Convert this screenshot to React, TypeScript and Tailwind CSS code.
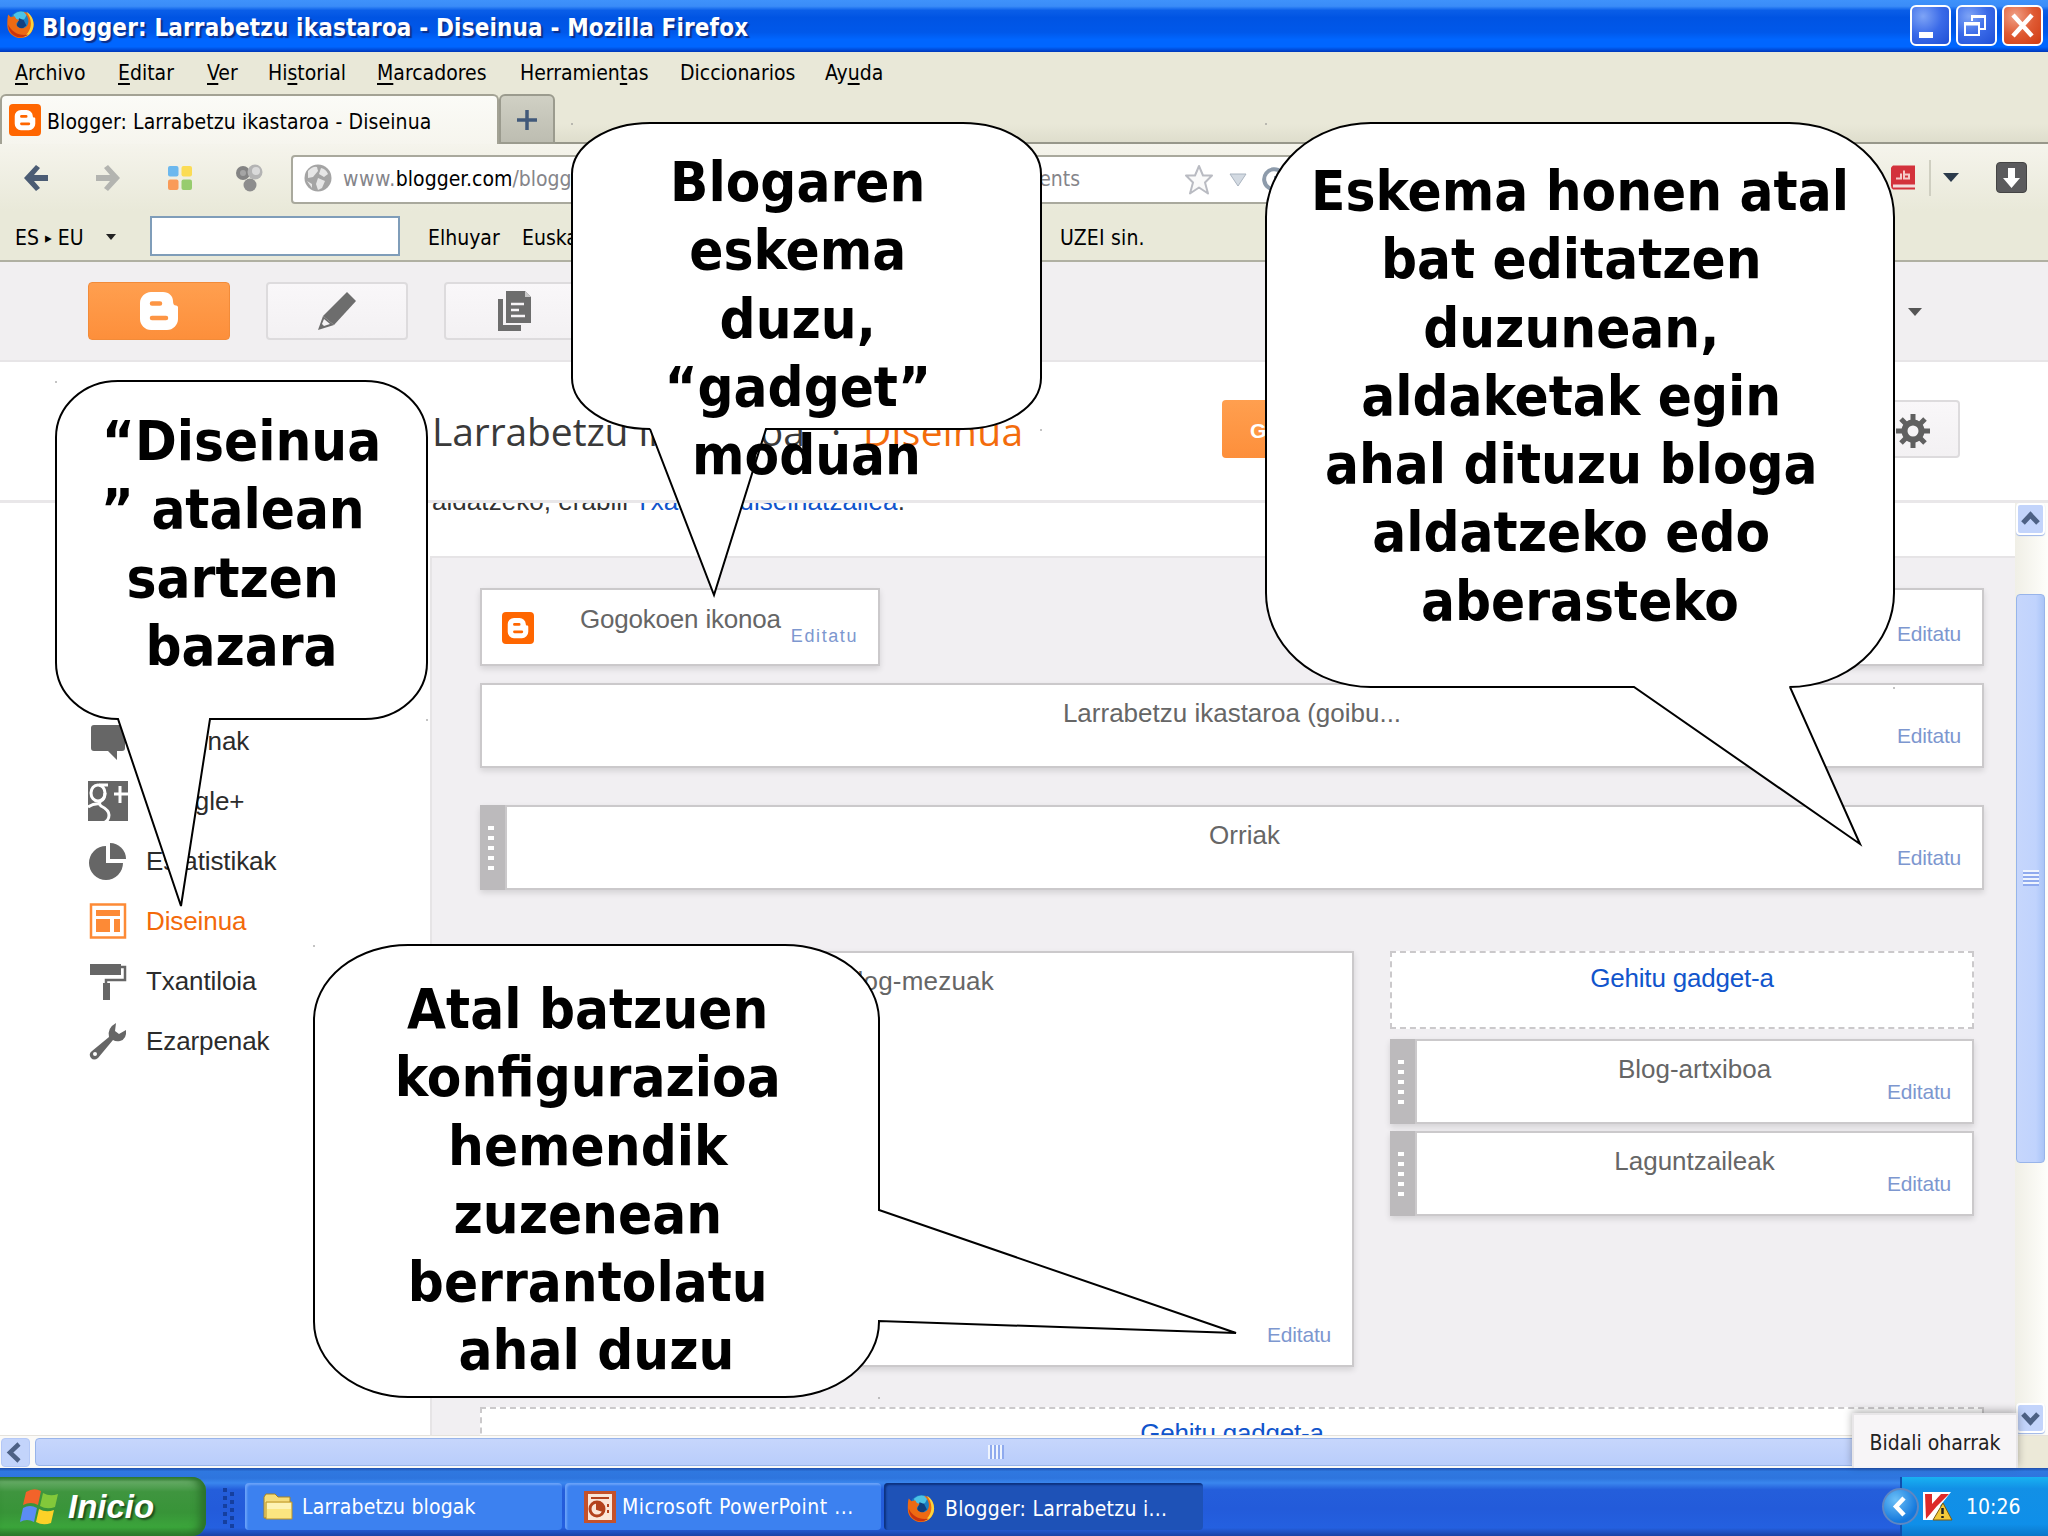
import type { ReactNode } from "react";

const menuItems = [
  { before: "", key: "A", after: "rchivo", width: "w-[103px]" },
  { before: "", key: "E", after: "ditar", width: "w-[89px]" },
  { before: "", key: "V", after: "er", width: "w-[61px]" },
  { before: "Hi", key: "s", after: "torial", width: "w-[109px]" },
  { before: "", key: "M", after: "arcadores", width: "w-[143px]" },
  { before: "Herramien", key: "t", after: "as", width: "w-[160px]" },
  { before: "Diccionarios", key: "", after: "", width: "w-[145px]" },
  { before: "Ay", key: "u", after: "da", width: "w-[80px]" },
];

const callouts = [
  {
    x: 572, y: 123, w: 469, h: 306,
    tail: [[766, 429], [714, 595], [650, 429]],
    side: "bottom",
    textTop: "pt-[25px]",
    lines: ["Blogaren ", "eskema ", "duzu, ", "“gadget” ", "moduan"],
  },
  {
    x: 1266, y: 123, w: 628, h: 564,
    tail: [[1790, 687], [1860, 844], [1634, 687]],
    side: "bottom",
    textTop: "pt-[34px]",
    lines: ["Eskema honen atal", "bat editatzen ", "duzunean, ", "aldaketak egin ", "ahal dituzu bloga ", "aldatzeko edo ", "aberasteko"],
  },
  {
    x: 56, y: 381, w: 371, h: 338,
    tail: [[210, 719], [181, 906], [118, 719]],
    side: "bottom",
    textTop: "pt-[26px]",
    lines: ["“Diseinua", "” atalean ", "sartzen ", "bazara"],
  },
  {
    x: 314, y: 945, w: 565, h: 452,
    tail: [[879, 1210], [1236, 1333], [879, 1321]],
    side: "right",
    textTop: "pt-[30px]",
    lines: ["Atal batzuen ", "konfigurazioa ", "hemendik ", "zuzenean ", "berrantolatu ", "ahal duzu"],
  },
];

const BloggerMark = ({ className, bg }: { className: string; bg: string }) => (
  <svg viewBox="0 0 24 24" className={className}>
    <rect width="24" height="24" rx="3" fill={bg} />
    <path d="M9 4.5h4.2a4.6 4.6 0 0 1 4.6 4.3c0 1 .3 1.3 1 1.3.6 0 .9.4.9 1v3.7a4.8 4.8 0 0 1-4.8 4.8H9a4.7 4.7 0 0 1-4.7-4.8V9.2A4.7 4.7 0 0 1 9 4.5z" fill="#fff" />
    <path d="M9.3 9.3h3.6M9.3 14.9h5.6" stroke={bg} strokeWidth="2" strokeLinecap="round" />
  </svg>
);

const FirefoxIcon = ({ className }: { className: string }) => (
  <svg viewBox="0 0 30 32" className={className}>
    <ellipse cx="16" cy="14" rx="12.5" ry="13" fill="#1c7fc4" />
    <path d="M8 5q7-6 15-1l-3 6-6 2-6-2z" fill="#4cc3e6" />
    <path d="M14 9l5 2 3 6-5 4-6-3z" fill="#0f3f80" />
    <path d="M2 5l3 3 4-1 2 3 3 1-3 4c0 4 4 6 8 5 4-1 6-5 5-10-1-4-3-6-5-8 6 1 11 7 11 14 0 8-6 15-14 15S1 25 1 17C1 13 1 8 2 5z" fill="#ee6a12" />
    <path d="M22 2c5 3 8 8 8 14 0 7-5 13-11 14 5-4 8-9 8-15 0-5-2-9-5-13z" fill="#fcd43c" />
    <path d="M2 16c0 7 5 14 13 14 4 0 7-1 9-3-9 2-18-2-22-11z" fill="#c9330f" />
  </svg>
);

const TitleBar = () => (
  <div className="h-[52px] shrink-0 flex items-center pl-1.5 pr-[5px] bg-[linear-gradient(#3f92fb_0%,#3a8cf8_12%,#0a5ee8_20%,#0054e3_34%,#0058ea_62%,#0066ff_76%,#0066ff_90%,#0045d0_97%,#0038b8_100%)]">
    <FirefoxIcon className="w-[28px] h-[29px] -mt-1" />
    <h1 className="ml-2 mt-1 text-[24px] tracking-[0.15px] font-bold text-white [text-shadow:2px_2px_1px_#0b2f8a]">
      Blogger: Larrabetzu ikastaroa - Diseinua - Mozilla Firefox
    </h1>
    <div className="ml-auto flex gap-[5px] -mt-0.5">
      <button className="w-[41px] h-[41px] rounded-md border-2 border-white bg-[radial-gradient(circle_at_30%_25%,#7ea4f6,#3a6ae8_50%,#1f4fd6)]">
        <svg viewBox="0 0 37 37"><rect x="7" y="25" width="14" height="6" fill="#fff" /></svg>
      </button>
      <button className="w-[41px] h-[41px] rounded-md border-2 border-white bg-[radial-gradient(circle_at_30%_25%,#7ea4f6,#3a6ae8_50%,#1f4fd6)]">
        <svg viewBox="0 0 37 37" fill="none" stroke="#fff" strokeWidth="2">
          <path d="M14 14V9h13v13h-5M14 10h13M7 16h14v12H7zM7 17.500h14" />
        </svg>
      </button>
      <button className="w-[41px] h-[41px] rounded-md border-2 border-white bg-[radial-gradient(circle_at_30%_25%,#f0a086,#df5a33_50%,#cf3a12)]">
        <svg viewBox="0 0 37 37"><path d="M9 8l19 21M28 8L9 29" stroke="#fff" strokeWidth="4.500" /></svg>
      </button>
    </div>
  </div>
);

const MenuBar = () => (
  <div className="h-[42px] shrink-0 flex items-center pl-[15px] pt-px bg-[#e9e8d8]">
    {menuItems.map((item) => (
      <div key={item.before + item.key} className={item.width}>
        {item.before}
        <span className="underline underline-offset-[3px] decoration-2">{item.key}</span>
        {item.after}
      </div>
    ))}
  </div>
);

const TabStrip = () => (
  <div className="h-[50px] shrink-0 flex items-end bg-[linear-gradient(#e9e8d8_60%,#dddccb)] shadow-[inset_0_-2px_#97978a]">
    <div className="w-[499px] h-[50px] flex items-center pl-[7px] rounded-t-md border-2 border-b-0 border-[#a3a294] bg-[linear-gradient(#fbfbf7,#f6f5ee)]">
      <BloggerMark className="size-[32px]" bg="#ff6600" />
      <span className="ml-1.5 mt-1.5 tracking-[0.1px]">Blogger: Larrabetzu ikastaroa - Diseinua</span>
    </div>
    <div className="w-[56px] h-[50px] flex items-center justify-center pt-0.5 rounded-t-md border-2 border-[#9b9b8e] bg-[linear-gradient(#d0d0c4,#bdbdb1)]">
      <svg viewBox="0 0 20 20" className="size-5"><path d="M10 0v20M0 10h20" stroke="#41597a" strokeWidth="3.500" /></svg>
    </div>
  </div>
);

const NavBar = () => (
  <div className="h-[67px] shrink-0 flex items-center pl-6 pr-[21px] bg-[linear-gradient(#f5f4ec,#e9e9d9)]">
    <svg viewBox="0 0 24 28" className="w-6 h-7"><path d="M0 14L12 1l4 3-6 7h14v6H10l6 7-4 3z" fill="#4b5c74" /></svg>
    <svg viewBox="0 0 24 28" className="ml-12 w-6 h-7"><path d="M24 14L12 1 8 4l6 7H0v6h14l-6 7 4 3z" fill="#b3b4b0" /></svg>
    <svg viewBox="0 0 24 24" className="ml-12 size-6">
      <rect width="10.500" height="10.500" rx="2" fill="#6cb8ee" />
      <rect x="13.500" width="10.500" height="10.500" rx="2" fill="#fbdc55" />
      <rect y="13.500" width="10.500" height="10.500" rx="2" fill="#f99b58" />
      <rect x="13.500" y="13.500" width="10.500" height="10.500" rx="2" fill="#97cc6e" />
    </svg>
    <svg viewBox="0 0 28 28" className="ml-[43px] size-7">
      <circle cx="8" cy="9" r="7" fill="#848484" />
      <circle cx="20" cy="8" r="7.500" fill="#b4b4b4" />
      <circle cx="21" cy="7" r="4" fill="#dadada" />
      <circle cx="15" cy="21" r="6.500" fill="#8d8d8d" />
      <circle cx="8" cy="9" r="3" fill="#a5a5a5" />
    </svg>
    <div className="ml-[28px] mt-1 w-[1020px] h-[49px] flex items-center pl-[11px] rounded-sm border-2 border-[#a9a99d] bg-white text-[#85858a]">
      <svg viewBox="0 0 28 28" className="-mt-1 size-7">
        <circle cx="14" cy="14" r="13.500" fill="#a4a4a4" />
        <path d="M4 7q5-5 9-4l1 4-5 6-5 1zM17 4q5 1 7 6l-4 3-5-3zM14 14l7 3-3 7-4 2-2-6zM3 17l5 3v4z" fill="#e6e6e6" />
      </svg>
      <span className="ml-[11px] tracking-[0.6px]">www.</span>
      <span className="text-black">blogger.com</span>
      <span>/blogger</span>
      <span className="ml-auto">ments</span>
      <svg viewBox="0 0 32 32" className="ml-[103px] mr-[14px] size-8">
        <path d="M16 2l4 9.500h9l-7 7 3 11-9-6-9 6 3-11-7-7h9z" fill="#fafafa" stroke="#b9bbc2" strokeWidth="2" strokeLinejoin="round" />
      </svg>
      <svg viewBox="0 0 18 14" className="mr-[12px] w-[18px] h-[14px]"><path d="M1 1h16L9 13z" fill="#d3dae2" stroke="#aab4c0" /></svg>
      <svg viewBox="0 0 28 28" className="mr-[22px] size-7"><path d="M22 6a10 10 0 1 0 2 12M24 3v9h-9" fill="none" stroke="#8d9bab" strokeWidth="4" /></svg>
    </div>
    <div className="ml-auto flex items-center">
      <svg viewBox="0 0 24 24" className="w-6 h-[25px]">
        <path d="M2 0h22v24H2q-2-1-2-4V2z" fill="#d3323c" />
        <path d="M2 19h22v3H2z" fill="#f3dcdc" />
        <path d="M5 13h5V8M13 5v8h5V9h-5" fill="none" stroke="#f5c9c9" strokeWidth="2" />
      </svg>
      <div className="ml-3.5 w-0.5 h-9 bg-[#cfcfc1]" />
      <svg viewBox="0 0 16 9" className="ml-3 w-4 h-[9px]"><path d="M0 0h16L8 9z" fill="#2b3a4a" /></svg>
      <div className="ml-[37px] size-[31px] rounded-sm border border-[#444] bg-[#5b5b5d]">
        <svg viewBox="0 0 29 29"><path d="M11 5h7v10h5l-8.500 10L6 15h5z" fill="#fff" /></svg>
      </div>
    </div>
  </div>
);

const DictionaryBar = () => (
  <div className="h-[51px] shrink-0 flex items-center pl-[15px] pt-1.5 bg-[#e9e9d9] border-b-2 border-[#b0b0a2]">
    <span className="w-[91px]">ES <small className="text-[15px] align-[2px]">▸</small> EU</span>
    <svg viewBox="0 0 10 6" className="w-[10px] h-[6px] -mt-1"><path d="M0 0h10L5 6z" fill="#222" /></svg>
    <div className="ml-[34px] -mt-1.5 w-[250px] h-10 border-2 border-[#7f9db9] bg-white" />
    <span className="ml-7 w-[94px]">Elhuyar</span>
    <span className="w-[538px]">Euskal</span>
    <span className="tracking-[0.2px]">UZEI sin.</span>
  </div>
);

const BloggerBar = () => (
  <div className="h-[100px] shrink-0 flex items-start pt-5 pl-[88px] bg-[#f1eff1] border-b-2 border-[#e7e5e7]">
    <button className="w-[142px] h-[58px] flex items-center justify-center rounded-sm border border-[#f28b39] bg-[linear-gradient(#ff9f4f,#fd8f3b)]">
      <svg viewBox="0 0 38 38" className="size-[38px]">
        <path d="M11 0h12c6 0 10 4 10 9 0 3 1 4.500 3 4.500 1.500 0 2 1 2 2V27c0 6-5 11-11 11H11C5 38 0 33 0 27V11C0 5 5 0 11 0z" fill="#fff" />
        <path d="M12 11.500h8M12 26h14" stroke="#fd9544" strokeWidth="4.500" strokeLinecap="round" />
      </svg>
    </button>
    <button className="ml-[36px] w-[142px] h-[58px] flex items-center justify-center rounded-sm border-2 border-[#dddbdd] bg-[linear-gradient(#f9f7f9,#f3f1f3)]">
      <svg viewBox="0 0 38 38" className="size-[38px]">
        <path d="M29 0l9 9-22 24-11-9z" fill="#6d6d6d" />
        <path d="M5 24l11 9L0 38z" fill="#6d6d6d" />
        <path d="M6 27l6 5-6 2-2-2z" fill="#f6f4f6" />
      </svg>
    </button>
    <button className="ml-[36px] w-[142px] h-[58px] flex items-center justify-center rounded-sm border-2 border-[#dddbdd] bg-[linear-gradient(#f9f7f9,#f3f1f3)]">
      <svg viewBox="0 0 34 40" className="w-[34px] h-10">
        <path d="M0 8h5v26h18v6H0z" fill="#6d6d6d" />
        <path d="M8 0h19l6 6v26H8z" fill="#6d6d6d" />
        <path d="M27 0v6h6" fill="#c9c9c9" />
        <path d="M13 13h13M13 19h8M13 25h14" stroke="#f6f4f6" strokeWidth="2.500" />
      </svg>
    </button>
    <svg viewBox="0 0 14 8" className="ml-auto mr-[126px] mt-[26px] w-[14px] h-2"><path d="M0 0h14L7 8z" fill="#555" /></svg>
  </div>
);

const PageHeading = () => (
  <div className="h-[141px] shrink-0 flex items-start pl-[432px] pr-[88px] pt-[38px] bg-white border-b-[3px] border-[#e9e7e9]">
    <h2 className="h-[58px] flex items-center pt-1 text-[39px] tracking-[-0.1px] font-['Open_Sans',sans-serif] text-[#3a3a3a]">
      <span className="w-[399px]">Larrabetzu ikastaroa</span>
      <span className="w-[32px]">·</span>
      <span className="text-[#f36c0c] tracking-[0.3px]">Diseinua</span>
    </h2>
    <button className="ml-auto w-[290px] h-[58px] pl-7 pt-1 text-left rounded-sm bg-[linear-gradient(#ff9f4f,#fd8f3b)] text-white font-bold text-[21px] font-['Liberation_Sans',sans-serif]">
      Gorde
    </button>
    <button className="ml-[340px] w-[108px] h-[58px] flex items-center justify-end pr-[28px] pt-1 rounded-sm border-2 border-[#dddbdd] bg-[linear-gradient(#f9f7f9,#f3f1f3)]">
      <svg viewBox="0 0 34 34" className="size-[34px]">
        <path d="M17 0v34M0 17h34M5 5l24 24M29 5L5 29" stroke="#606060" strokeWidth="5" />
        <circle cx="17" cy="17" r="8.500" fill="#f6f4f6" stroke="#606060" strokeWidth="6" />
      </svg>
    </button>
  </div>
);

const NavItem = ({ label, active, children }: { label: string; active?: boolean; children: ReactNode }) => (
  <li className="h-[60px] flex items-center">
    <svg viewBox="0 0 40 40" className="size-10" fill="#666">{children}</svg>
    <span className={active ? "ml-[18px] text-[#f3690a]" : "ml-[18px] text-[#2b2b2b]"}>{label}</span>
  </li>
);

const Sidebar = () => (
  <ul className="w-[430px] shrink-0 bg-white pt-[208px] pl-[88px] tracking-[-0.1px]">
    <NavItem label="Iruzkinak">
      <path d="M6 4h28q3 0 3 3v20q0 3-3 3h-5v9l-9-9H6q-3 0-3-3V7q0-3 3-3z" />
    </NavItem>
    <NavItem label="Google+">
      <path d="M0 0h40v40H0z" />
      <ellipse cx="10" cy="12" rx="7" ry="8" fill="none" stroke="#fff" strokeWidth="3" />
      <path d="M11 4h9M17 12q0 6-4 8-3 2 0 5 8 4 8 9 0 5-4 7M0 26q6-4 12-3M26 13h14M32 5v17" fill="none" stroke="#fff" strokeWidth="3" />
    </NavItem>
    <NavItem label="Estatistikak">
      <path d="M18 5v17h17a17 17 0 1 1-17-17z" />
      <path d="M22 2a16 16 0 0 1 16 16H22z" />
    </NavItem>
    <NavItem label="Diseinua" active>
      <path d="M3 3.500h34v33H3z" fill="none" stroke="#fd8a36" strokeWidth="2.500" />
      <path d="M8 9h24v6H8zM8 18h14v13H8zM26 18h6v13h-6z" fill="#fd8a36" />
    </NavItem>
    <NavItem label="Txantiloia">
      <path d="M2 3h31v11H2z" />
      <path d="M33 6h4v13H18v5" fill="none" stroke="#666" strokeWidth="2.500" />
      <path d="M15 22h7v17h-7z" />
    </NavItem>
    <NavItem label="Ezarpenak">
      <path d="M28 2l-1 8 4 3 7-4q1 9-6 11-4 1-7-1L10 37q-4 3-7 0-3-4 1-7l17-14q-2-9 7-14z" />
      <circle cx="7" cy="33" r="2" fill="#fff" />
    </NavItem>
  </ul>
);

const DragHandle = () => (
  <div className="w-[25px] shrink-0 flex flex-col items-center justify-center gap-1.5 pr-1 bg-[#bcbabc]">
    <i className="w-1.5 h-1 bg-white" />
    <i className="w-1.5 h-1 bg-white" />
    <i className="w-1.5 h-1 bg-white" />
    <i className="w-1.5 h-1 bg-white" />
    <i className="w-1.5 h-1 bg-white" />
  </div>
);

const Gadget = ({ title, className, handle }: { title: string; className: string; handle?: boolean }) => (
  <div className={"flex bg-white shadow-[0_3px_6px_rgba(0,0,0,0.12)] " + className}>
    {handle && <DragHandle />}
    <div className="flex-1 grid grid-cols-[1fr_auto_1fr] border-2 border-[#cbc9cb] pt-3.5 pb-[18px] px-[21px]">
      <span className="col-start-2 h-7 leading-7 text-[#666]">{title}</span>
      <a className="self-end justify-self-end h-6 leading-6 text-[21px] tracking-[-0.2px] text-[#7d97cf]">Editatu</a>
    </div>
  </div>
);

const LayoutEditor = () => (
  <div className="flex-1 flex flex-col overflow-hidden bg-white">
    <p className="h-[53px] shrink-0 whitespace-nowrap text-[#333]">
      <span className="block -mt-[17px] pl-0.5 leading-[30px] tracking-[0.05px]">
        aldatzeko, erabili <a className="text-[#1155cc]">Txantiloi diseinatzailea</a>.
      </span>
    </p>
    <div className="flex-1 bg-[#f1eff2] border-t-2 border-l-2 border-[#e6e4e6] pl-[48px] pr-[31px] pt-[30px]">
      <div className="flex justify-between">
        <div className="w-[400px] h-[78px] flex items-start border-2 border-[#cbc9cb] bg-white pl-5 shadow-[0_3px_6px_rgba(0,0,0,0.12)]">
          <BloggerMark className="mt-[22px] size-8" bg="#ff6600" />
          <span className="mt-[14px] ml-[46px] tracking-[-0.2px] leading-[30px] text-[#666]">Gogokoen ikonoa</span>
          <a className="mt-[34px] ml-2.5 text-[18px] leading-6 tracking-[1.6px] text-[#7d97cf]">Editatu</a>
        </div>
        <Gadget title="Navbar" className="w-[401px] h-[78px]" />
      </div>
      <Gadget title="Larrabetzu ikastaroa (goibu..." className="mt-[17px] h-[85px]" />
      <Gadget title="Orriak" className="mt-[37px] h-[85px]" handle />
      <div className="mt-[61px] flex items-start justify-between pr-2.5">
        <Gadget title="Blog-mezuak" className="w-[874px] h-[416px] tracking-[0.2px]" />
        <div className="w-[584px] flex flex-col">
          <div className="h-[78px] pt-[10px] leading-[30px] tracking-[-0.2px] text-center border-2 border-dashed border-[#cbc9cb] bg-white text-[#1155cc]">Gehitu gadget-a</div>
          <Gadget title="Blog-artxiboa" className="mt-2.5 h-[85px]" handle />
          <Gadget title="Laguntzaileak" className="mt-[7px] h-[85px]" handle />
        </div>
      </div>
      <div className="mt-10 h-[78px] pt-[9px] leading-[30px] tracking-[-0.2px] text-center border-2 border-dashed border-[#cbc9cb] bg-white text-[#1155cc]">Gehitu gadget-a</div>
    </div>
  </div>
);

const VerticalScrollbar = () => (
  <div className="w-[33px] shrink-0 flex flex-col items-center pr-0.5 bg-[linear-gradient(90deg,#f0efe6,#fefefb)]">
    <div className="w-[29px] h-8 rounded-sm border-2 border-white bg-[#c3d4fb] shadow-[0_1px_1px_#9db5e8]">
      <svg viewBox="0 0 25 28"><path d="M5 18l7.500-8 7.500 8" fill="none" stroke="#4d6185" strokeWidth="5" /></svg>
    </div>
    <div className="mt-[59px] w-[29px] h-[569px] flex flex-col items-center justify-center gap-0.5 rounded-sm border border-[#98b4ea] bg-[linear-gradient(90deg,#c6d6fc,#c0d3fd_70%,#a9c4f7)]">
      <i className="w-4 h-0.5 bg-[#8faaee] shadow-[0_-2px_#eef4fe]" />
      <i className="w-4 h-0.5 bg-[#8faaee] shadow-[0_-2px_#eef4fe]" />
      <i className="w-4 h-0.5 bg-[#8faaee] shadow-[0_-2px_#eef4fe]" />
      <i className="w-4 h-0.5 bg-[#8faaee] shadow-[0_-2px_#eef4fe]" />
    </div>
    <div className="mt-auto mb-0.5 w-[29px] h-[30px] rounded-sm border-2 border-white bg-[#c3d4fb] shadow-[0_1px_1px_#9db5e8]">
      <svg viewBox="0 0 25 26"><path d="M5 9l7.500 8L20 9" fill="none" stroke="#4d6185" strokeWidth="5" /></svg>
    </div>
  </div>
);

const HorizontalScrollbar = () => (
  <div className="h-[33px] shrink-0 flex items-center bg-[#fbfaf7] border-t border-[#e5e2dc]">
    <div className="ml-px w-[29px] h-[29px] rounded-sm border border-[#b4c8f6] bg-[#c3d4fb]">
      <svg viewBox="0 0 27 27"><path d="M17 5l-9 8.500 9 8.500" fill="none" stroke="#4d6185" strokeWidth="4.500" /></svg>
    </div>
    <div className="ml-[5px] w-[1924px] h-[28px] flex items-center justify-center gap-0.5 rounded-sm border border-[#98b4ea] bg-[linear-gradient(#c6d6fc,#b9cdfb)]">
      <i className="w-0.5 h-3.5 bg-[#8faaee] shadow-[-2px_0_#eef4fe]" />
      <i className="w-0.5 h-3.5 bg-[#8faaee] shadow-[-2px_0_#eef4fe]" />
      <i className="w-0.5 h-3.5 bg-[#8faaee] shadow-[-2px_0_#eef4fe]" />
      <i className="w-0.5 h-3.5 bg-[#8faaee] shadow-[-2px_0_#eef4fe]" />
    </div>
    <div className="ml-auto w-[33px] h-full bg-[#ece9d8]" />
  </div>
);

const Taskbar = () => (
  <div className="h-[68px] shrink-0 flex items-end text-white bg-[linear-gradient(#1f4fae_0%,#2f78e0_5%,#2e75de_15%,#3a86ee_22%,#245edb_32%,#235bda_60%,#2460e0_88%,#1941a5_100%)]">
    <div className="w-[206px] h-[59px] flex items-center pl-5 rounded-r-[14px] bg-[linear-gradient(#2f7d2f_0%,#68ad68_8%,#3f953f_25%,#389438_60%,#3ba53b_85%,#2c7e2c_100%)] shadow-[inset_-6px_0_8px_#2a702a]">
      <svg viewBox="0 0 40 38" className="w-10 h-[38px]">
        <path d="M6 4q8-5 15-1l-3 14q-7-4-15 0z" fill="#f2632a" />
        <path d="M23 5q7 4 15 1l-3 13q-8 3-15-1z" fill="#83c83a" />
        <path d="M3 20q7-4 14 0l-3 14q-7-4-14 0z" fill="#5b8cf5" />
        <path d="M19 21q7 4 15 1l-3 13q-8 3-15-1z" fill="#fbd128" />
      </svg>
      <span className="ml-2 text-[33px] font-bold italic font-['Liberation_Sans',sans-serif] [text-shadow:2px_2px_2px_#1c4d1c]">Inicio</span>
    </div>
    <svg viewBox="0 0 12 40" className="ml-[17px] mb-2 w-3 h-10">
      <path d="M2 0v40M9 4v36" stroke="#153f9f" strokeWidth="4" strokeDasharray="4 4" />
    </svg>
    <div className="ml-2.5 mb-1.5 flex h-[47px] gap-[3px]">
      <div className="w-[317px] flex items-center pl-[18px] rounded-sm bg-[#3c81f0] shadow-[inset_2px_2px_2px_#6aa2f8]">
        <svg viewBox="0 0 32 26" className="w-8 h-[28px]">
          <path d="M1 3l2-3h9l3 3h12v6H8L3 24H1z" fill="#f5dd7a" stroke="#a68324" />
          <path d="M3 25V8h26v17z" fill="#fbe680" stroke="#b8922c" />
          <path d="M4 9h24v6H4z" fill="#fdf3b4" />
        </svg>
        <span className="ml-[7px] mt-0.5 tracking-[0.15px]">Larrabetzu blogak</span>
      </div>
      <div className="w-[316px] flex items-center pl-[19px] rounded-sm bg-[#3c81f0] shadow-[inset_2px_2px_2px_#6aa2f8]">
        <svg viewBox="0 0 32 32" className="size-8">
          <rect width="32" height="32" fill="#c4512a" />
          <path d="M4 3h24v26H4z" fill="#fbe6d8" />
          <circle cx="13" cy="18" r="7" fill="none" stroke="#b3421d" strokeWidth="3" />
          <path d="M13 18v-7a7 7 0 0 1 6 9zM7 7h18M24 13v3M24 19v3" fill="#b3421d" stroke="#b3421d" strokeWidth="2" />
        </svg>
        <span className="ml-1.5 mt-0.5 tracking-[0.5px]">Microsoft PowerPoint ...</span>
      </div>
      <div className="w-[319px] flex items-center pl-[22px] pt-1 rounded-sm bg-[#1e52b7] shadow-[inset_2px_2px_2px_#0d327f]">
        <FirefoxIcon className="w-[29px] h-[29px]" />
        <span className="ml-2.5 mt-0.5 tracking-[0.25px]">Blogger: Larrabetzu i...</span>
      </div>
    </div>
    <div className="ml-auto w-[148px] h-[59px] flex items-center bg-[linear-gradient(#18b2f2,#1290e6_20%,#0f8fe9_80%,#0b77c9)] border-l-2 border-[#0f4fae]">
      <div className="relative shrink-0 -ml-[20px] size-[37px] rounded-full border-2 border-[#5f87c2] bg-[radial-gradient(circle_at_35%_30%,#6cc0f8,#1478dc_70%)]">
        <svg viewBox="0 0 33 33"><path d="M20 8l-8 8.500 8 8.500" fill="none" stroke="#fff" strokeWidth="4.500" /></svg>
      </div>
      <svg viewBox="0 0 30 30" className="ml-1 size-[30px] shrink-0">
        <path d="M0 0h28L17 14l11 14H0z" fill="#fff" />
        <path d="M2 2h7v10L18 2h8L14 14 3 27z" fill="#dd2a2a" />
        <path d="M20 11l9 17H10z" fill="#f3c93a" stroke="#7a5a10" />
        <path d="M19.500 16v6M19.500 24v2" stroke="#222" strokeWidth="2.500" />
      </svg>
      <span className="ml-[13px] mt-0.5 text-[21px]">10:26</span>
    </div>
  </div>
);

// rounded rectangle with a pointed tail leaving from its bottom or right side
const calloutPath = (x: number, y: number, w: number, h: number, side: string, tail: number[][]) => {
  const rx = w / 6;
  const ry = h / 6;
  const arc = `a${rx} ${ry} 0 0 1 `;
  const points = tail.map((p) => `L${p[0]} ${p[1]}`).join("");
  return (
    `M${x + rx} ${y}H${x + w - rx}${arc}${rx} ${ry}` +
    (side === "right" ? points : "") +
    `V${y + h - ry}${arc}${-rx} ${ry}` +
    (side === "bottom" ? points : "") +
    `H${x + rx}${arc}${-rx} ${-ry}V${y + ry}${arc}${rx} ${-ry}z`
  );
};

const Callouts = () => (
  <div className="absolute inset-0 pointer-events-none">
    <svg viewBox="0 0 2048 1536" className="absolute inset-0 w-full h-full" fill="#fff" stroke="#000" strokeWidth="2">
      {callouts.map((c) => (
        <g key={c.x}>
          <path d={calloutPath(c.x, c.y, c.w, c.h, c.side, c.tail)} />
          <path d={`M${c.x} ${c.y}v2M${c.x + c.w} ${c.y + c.h}v2`} stroke="#888" strokeWidth="1" />
        </g>
      ))}
    </svg>
    {callouts.map((c) => (
      <div
        key={c.x}
        className={"absolute flex flex-col text-center whitespace-pre text-[56px] leading-[68.3px] font-bold " + c.textTop}
        style={{ left: c.x, top: c.y, width: c.w }}
      >
        {c.lines.map((line) => (
          <span key={line} className="-mx-10">{line}</span>
        ))}
      </div>
    ))}
  </div>
);

const App = () => {
  return (
    <div className="relative w-[2048px] h-[1536px] overflow-hidden flex flex-col bg-white text-[21px] text-black font-['DejaVu_Sans_Condensed','DejaVu_Sans',sans-serif]">
      <TitleBar />
      <MenuBar />
      <TabStrip />
      <NavBar />
      <DictionaryBar />
      <BloggerBar />
      <PageHeading />
      <div className="flex-1 min-h-0 flex text-[26px] font-['Liberation_Sans',sans-serif]">
        <Sidebar />
        <LayoutEditor />
        <VerticalScrollbar />
      </div>
      <HorizontalScrollbar />
      <Taskbar />
      <div className="absolute left-[1852px] top-[1413px] w-[166px] h-[55px] flex items-center justify-center pt-1 bg-[#f7f5f7] border-2 border-b-0 border-[#e8e6e8] shadow-[0_-2px_8px_rgba(0,0,0,0.3)] text-[21px] text-[#222]">
        Bidali oharrak
      </div>
      <Callouts />
    </div>
  );
};

export default App;
